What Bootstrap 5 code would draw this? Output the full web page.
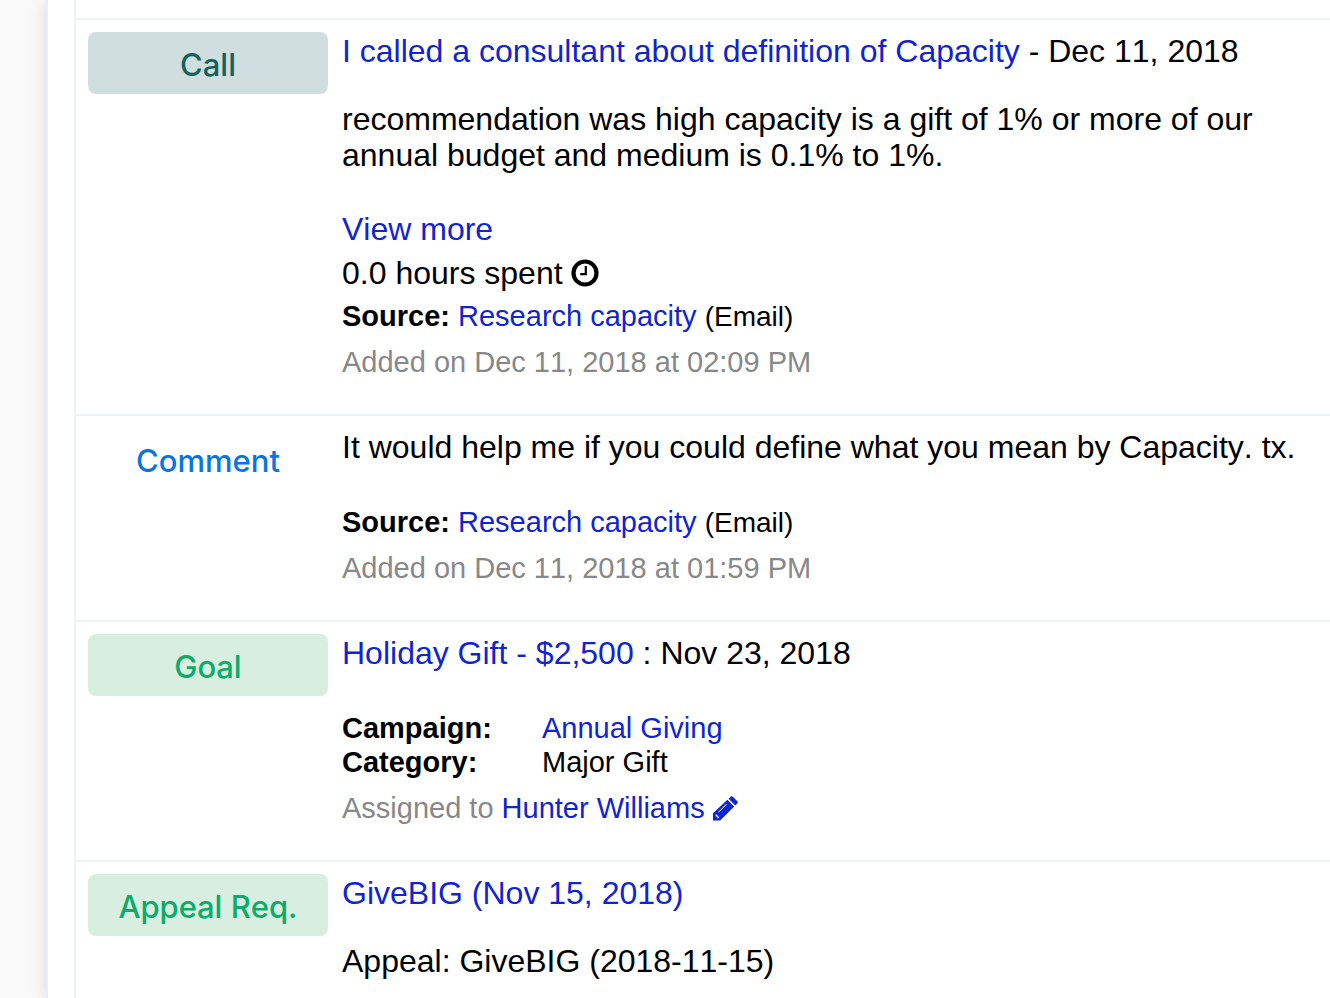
<!DOCTYPE html>
<html lang="en">
<head>
<meta charset="utf-8">
<meta name="viewport" content="width=device-width, initial-scale=1">
<title>Activity timeline</title>
<link href="https://cdn.jsdelivr.net/npm/bootstrap@5.3.0/dist/css/bootstrap.min.css" rel="stylesheet">
<style>
body{font-family:"Liberation Sans",Arial,sans-serif;font-size:32px;line-height:36px;color:#000;background:#f9f9f9;font-kerning:none}
a{color:#1024d0;text-decoration:none}
.sheet{margin-left:46px;padding-left:26px;background:#fff;border-left:2px solid #e8eef6;box-shadow:0 0 16px rgba(0,0,0,.13)}
.feed{border-left:2px solid #edf2f7;padding-top:18px;min-height:100vh}
.entry{border-top:2px solid #edf2f7;padding:12px 0 35px 12px;gap:14px}
.entry:last-child{padding-bottom:0}
.kind{width:240px;height:62px;border-radius:8px;line-height:66px;font-family:Inter,sans-serif;font-size:31px;font-weight:500}
.kind-call{background:#d1dedf;color:#10645d}
.kind-comment{color:#0875e1}
.kind-goal{background:#d7eee0;color:#0bab6a}
.details{padding-top:1px}
.note{margin:32px 0 0}
.more{margin-top:38px}
.spent{margin-top:8px}
.meta{font-size:29px;line-height:34px}
.source-near{margin-top:8px}
.source-far{margin-top:40px}
.channel{font-size:28px;line-height:1}
.stamp{color:#888;margin-top:12px}
.field-name{width:200px}
</style>
</head>
<body>
<main class="sheet">
<div class="feed">
<article class="entry d-flex">
<div class="kind kind-call flex-shrink-0 text-center">Call</div>
<div class="details flex-grow-1">
<div><a href="#">I called a consultant about definition of Capacity</a> - Dec 11, 2018</div>
<p class="note">recommendation was high capacity is a gift of 1% or more of our annual budget and medium is 0.1% to 1%.</p>
<div class="more"><a href="#">View more</a></div>
<div class="spent d-flex align-items-center gap-2">0.0 hours spent
<svg width="28" height="28" viewBox="0 0 28 28" fill="none" stroke="#000" aria-hidden="true"><circle cx="14" cy="14" r="11.5" stroke-width="4.2"/><path d="M14.8 7v8.2H9.2" stroke-width="2.2"/></svg></div>
<div class="meta source-near"><b>Source:</b> <a href="#">Research capacity</a> <span class="channel">(Email)</span></div>
<div class="meta stamp">Added on Dec 11, 2018 at 02:09 PM</div>
</div>
</article>
<article class="entry d-flex">
<div class="kind kind-comment flex-shrink-0 text-center">Comment</div>
<div class="details flex-grow-1">
<div>It would help me if you could define what you mean by Capacity. tx.</div>
<div class="meta source-far"><b>Source:</b> <a href="#">Research capacity</a> <span class="channel">(Email)</span></div>
<div class="meta stamp">Added on Dec 11, 2018 at 01:59 PM</div>
</div>
</article>
<article class="entry d-flex">
<div class="kind kind-goal flex-shrink-0 text-center">Goal</div>
<div class="details flex-grow-1">
<div><a href="#">Holiday Gift - $2,500</a> : Nov 23, 2018</div>
<dl class="meta source-far mb-0">
<div class="d-flex"><dt class="field-name">Campaign:</dt><dd class="mb-0"><a href="#">Annual Giving</a></dd></div>
<div class="d-flex"><dt class="field-name">Category:</dt><dd class="mb-0">Major Gift</dd></div>
</dl>
<div class="meta stamp d-flex align-items-center gap-2"><span>Assigned to <a href="#">Hunter Williams</a></span>
<a href="#" class="d-flex" aria-label="Edit assignee"><svg width="25" height="25" viewBox="0 0 25 25" fill="currentColor" aria-hidden="true"><path fill-rule="evenodd" d="M14.4 3.8 21.2 10.6 7.2 24.5H0v-7.2ZM13.2 8 5.2 16l.6.6 8-8ZM2.6 18.6v1.9h1.9v1.9l1.9-.9-2.9-2.9Z"/><path d="m15.5 2.7 1.8-1.8q1.4-1.4 2.8 0l4 4q1.4 1.4 0 2.8l-1.8 1.8Z"/></svg></a></div>
</div>
</article>
<article class="entry d-flex">
<div class="kind kind-goal flex-shrink-0 text-center">Appeal Req.</div>
<div class="details flex-grow-1">
<div><a href="#">GiveBIG (Nov 15, 2018)</a></div>
<p class="note">Appeal: GiveBIG (2018-11-15)</p>
</div>
</article>
</div>
</main>
<script src="https://cdn.jsdelivr.net/npm/bootstrap@5.3.0/dist/js/bootstrap.bundle.min.js"></script>
</body>
</html>
